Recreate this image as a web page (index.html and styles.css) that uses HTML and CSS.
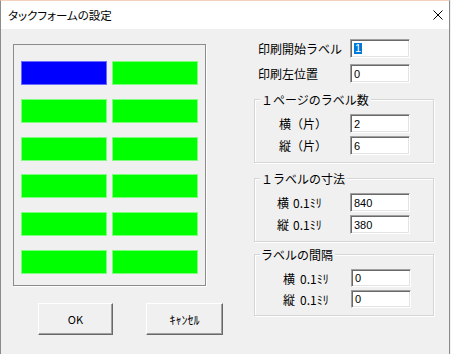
FILE: index.html
```html
<!DOCTYPE html>
<html lang="ja">

<head>
    <meta charset="UTF-8">
    <title>タックフォームの設定</title>
    <link rel="stylesheet" href="styles.css">
</head>

<body>
    <div class="window">
        <div class="titlebar">
            <span class="title">タックフォームの設定</span>
            <svg class="close" width="10" height="10" viewBox="0 0 10 10">
                <path d="M0.5 0.5L9.5 9.5M9.5 0.5L0.5 9.5" stroke="#000" stroke-width="1" fill="none" />
            </svg>
        </div>
        <div class="client">
            <div class="left">
                <div class="preview">
                    <div class="sheet">
                        <div class="tack current"></div>
                        <div class="tack"></div>
                        <div class="tack"></div>
                        <div class="tack"></div>
                        <div class="tack"></div>
                        <div class="tack"></div>
                        <div class="tack"></div>
                        <div class="tack"></div>
                        <div class="tack"></div>
                        <div class="tack"></div>
                        <div class="tack"></div>
                        <div class="tack"></div>
                    </div>
                </div>
                <div class="buttons">
                    <button class="btn btn-ok">OK</button>
                    <button class="btn btn-cancel">ｷｬﾝｾﾙ</button>
                </div>
            </div>

            <div class="right">
                <div class="row">
                    <span class="caption">印刷開始ラベル</span>
                    <div class="edit"><span class="sel">1</span></div>
                </div>
                <div class="row">
                    <span class="caption">印刷左位置</span>
                    <div class="edit">0</div>
                </div>

                <div class="group group-count">
                    <div class="group-title">１ページのラベル数</div>
                    <div class="row">
                        <span class="axis">横</span><span class="unit">（片）</span>
                        <div class="edit">2</div>
                    </div>
                    <div class="row">
                        <span class="axis">縦</span><span class="unit">（片）</span>
                        <div class="edit">6</div>
                    </div>
                </div>

                <div class="group group-size">
                    <div class="group-title">１ラベルの寸法</div>
                    <div class="row">
                        <span class="axis">横</span><span class="unit">0.1ﾐﾘ</span>
                        <div class="edit">840</div>
                    </div>
                    <div class="row">
                        <span class="axis">縦</span><span class="unit">0.1ﾐﾘ</span>
                        <div class="edit">380</div>
                    </div>
                </div>

                <div class="group group-gap">
                    <div class="group-title">ラベルの間隔</div>
                    <div class="row">
                        <span class="axis">横</span><span class="unit">0.1ﾐﾘ</span>
                        <div class="edit">0</div>
                    </div>
                    <div class="row">
                        <span class="axis">縦</span><span class="unit">0.1ﾐﾘ</span>
                        <div class="edit">0</div>
                    </div>
                </div>
            </div>
        </div>
    </div>
</body>

</html>
```

FILE: styles.css
```css
body {
    margin: 0;
    background-color: #f0f0f0;
    font-family: "Noto Sans CJK JP", sans-serif;
    font-size: 12px;
    color: #000;
}

.window {
    width: 450px;
    height: 354px;
    box-sizing: border-box;
    border-top: 1px solid #f3d2bd;
    border-left: 1px solid #8b8b8b;
    border-right: 1px solid #8b8b8b;
    background-color: #f0f0f0;
    display: flex;
    flex-direction: column;
}

.titlebar {
    height: 28px;
    background-color: #fff;
    display: flex;
    align-items: center;
}

.title {
    margin-left: 7px;
    font-size: 11.5px;
    font-feature-settings: "palt";
}

.close {
    margin-left: auto;
    margin-right: 6px;
}

.client {
    flex: 1;
    display: flex;
}

.left {
    width: 193px;
    flex-shrink: 0;
    margin-left: 12px;
    margin-top: 15px;
}

.preview {
    width: 193px;
    height: 242px;
    box-sizing: border-box;
    border: 1px solid #8c8c8c;
    box-shadow: 1px 1px #fff;
    padding: 16px 7px 0;
}

.sheet {
    display: grid;
    grid-template-columns: 86px 86px;
    grid-auto-rows: 24px;
    column-gap: 5px;
    row-gap: 13.8px;
}

.tack {
    box-sizing: border-box;
    background-color: #00ff00;
    border: 1px solid #7dff7d;
}

.tack.current {
    background-color: #0000ff;
    border-color: #6a6aff;
}

.buttons {
    display: flex;
    margin-top: 17px;
    padding-left: 25px;
    gap: 33px;
}

.btn {
    flex-shrink: 0;
    height: 32px;
    box-sizing: border-box;
    padding: 0;
    background-color: #f0f0f0;
    border: 1px solid;
    border-color: #fff #696969 #696969 #fff;
    box-shadow: inset -1px -1px #a0a0a0;
    font-family: "Noto Sans CJK JP", sans-serif;
    font-size: 12px;
    color: #000;
}

.btn-ok {
    width: 75px;
    font-size: 11px;
}

.btn-cancel {
    width: 77px;
}

.right {
    flex-shrink: 0;
    margin-left: 48px;
    width: 180px;
    padding-top: 10px;
}

.row {
    display: flex;
    align-items: center;
    height: 19px;
}

.row + .row {
    margin-top: 6px;
}

.caption {
    width: 96px;
    box-sizing: border-box;
    padding-left: 4px;
}

.edit {
    width: 60px;
    height: 19px;
    box-sizing: border-box;
    background-color: #fff;
    border: 1px solid;
    border-color: #a0a0a0 #fff #fff #a0a0a0;
    box-shadow: inset 1px 1px #696969, inset -1px -1px #e3e3e3;
    padding-left: 3px;
    display: flex;
    align-items: center;
    font-family: "Liberation Sans", sans-serif;
    font-size: 11px;
}

.sel {
    display: inline-block;
    line-height: 11px;
    padding: 0 1px;
    background-color: #0078d7;
    color: #fff;
}

.group {
    margin-top: 16px;
    border: 1px solid #d5d5d5;
    box-shadow: inset 1px 1px #fff, 1px 1px #fff;
    padding-bottom: 7px;
}

.group-size {
    margin-top: 15px;
}

.group-gap {
    margin-top: 12px;
}

.group-title {
    width: fit-content;
    margin: -7px 0 0 5px;
    padding: 0 2px 0 1px;
    line-height: 14px;
    background-color: #f0f0f0;
}

.group .row {
    margin-top: 7px;
    padding-right: 23px;
}

.group .row + .row {
    margin-top: 3px;
}

.group .edit {
    margin-left: auto;
}

.group-count .axis {
    margin-left: 24px;
}

.group-size .axis {
    margin-left: 22px;
}

.group-size .unit {
    margin-left: 4px;
}

.group-gap .row {
    height: 18px;
    padding-right: 22px;
}

.group-gap .edit {
    height: 18px;
}

.group-gap .axis {
    margin-left: 28px;
}

.group-gap .unit {
    margin-left: 5px;
}
```
